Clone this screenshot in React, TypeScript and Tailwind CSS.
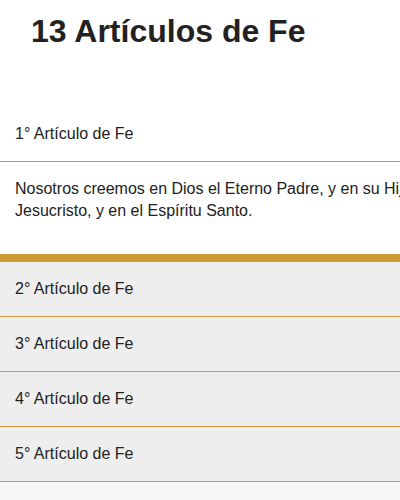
const articles = [
  "2° Artículo de Fe",
  "3° Artículo de Fe",
  "4° Artículo de Fe",
  "5° Artículo de Fe",
];

export default function App() {
  return (
    <div
      className="w-[400px] h-[500px] overflow-hidden bg-[#f7f7f7] text-[#222]"
      style={{ fontFamily: '"Liberation Sans", Arial, sans-serif' }}
    >
      <div className="w-[460px]">
        {/* Header */}
        <div className="h-[107px] bg-white pl-[31px] pt-[12px]">
          <h1 className="text-[32px] leading-[38px] font-bold text-[#222]">
            13 Artículos de Fe
          </h1>
        </div>

        {/* Open article */}
        <div className="bg-white">
          <div className="h-[55px] flex items-center px-[15px] text-[16px] border-b border-[#cf9a36]">
            1° Artículo de Fe
          </div>
          <div className="pl-[15px] pr-[30px] pt-[16px] pb-[32px] text-[16px] leading-[22px]">
            Nosotros creemos en Dios el Eterno Padre, y en su Hijo, Jesucristo, y
            en el Espíritu Santo.
          </div>
        </div>
        <div className="h-[8px] bg-[#cc9933]" />

        {/* Closed articles */}
        {articles.map((title, i) => (
          <div
            key={i}
            className="h-[55px] flex items-center px-[15px] text-[16px] bg-[#eeeeee] border-b border-[#cf9a36]"
          >
            {title}
          </div>
        ))}
      </div>
    </div>
  );
}
